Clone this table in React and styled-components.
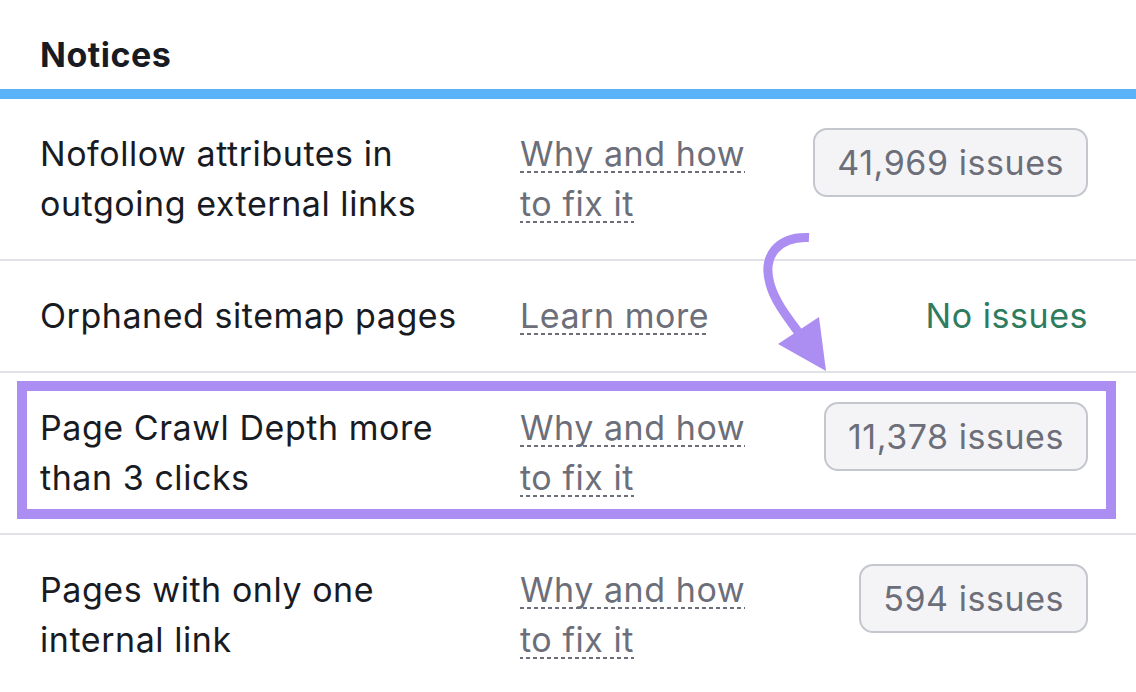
import React from "react";
import styled, { createGlobalStyle } from "styled-components";

const Global = createGlobalStyle`
  html, body { margin: 0; padding: 0; background: #ffffff; }
  body { font-family: Inter, "Noto Sans", Arial, sans-serif; -webkit-font-smoothing: antialiased; }
`;

const Page = styled.div`
  position: relative;
  width: 1136px;
  height: 692px;
  overflow: hidden;
  background: #ffffff;
`;

const Header = styled.div`
  box-sizing: border-box;
  height: 99px;
  padding: 35px 40px 0;
  border-bottom: 10px solid #5ab3f8;
`;

const Title = styled.h2`
  margin: 0;
  font-size: 34px;
  line-height: 40px;
  font-weight: 700;
  color: #191b23;
  letter-spacing: 0.5px;
`;

const Row = styled.div`
  position: relative;
  display: grid;
  grid-template-columns: 440px 240px 1fr;
  column-gap: 40px;
  align-items: start;
  padding: 30px 48px 30px 40px;
  border-bottom: 2px solid #e0e1e9;
  font-size: 34px;
  line-height: 50px;
  letter-spacing: 0.55px;
`;

const Name = styled.div`
  color: #191b23;
`;

const LinkCell = styled.div`
  color: #6c6e79;
`;

const Dashed = styled.span`
  background-image: linear-gradient(to right, #6c6e79 64%, transparent 64%);
  background-size: 7px 2px;
  background-repeat: repeat-x;
  background-position: 0 calc(100% - 1px);
`;

const Right = styled.div`
  justify-self: end;
`;

const Badge = styled.span`
  display: inline-flex;
  align-items: center;
  height: 69px;
  box-sizing: border-box;
  padding: 0 22px;
  border: 2px solid #c5c7cf;
  border-radius: 14px;
  background: #f4f4f7;
  color: #6c6e79;
  white-space: nowrap;
  margin-top: -1px;
`;

const NoIssues = styled.span`
  color: #2e7c5f;
  white-space: nowrap;
`;

const Highlight = styled.div`
  position: absolute;
  top: 8px;
  left: 17px;
  right: 20px;
  bottom: 14px;
  border: 10px solid #ac8ef3;
  pointer-events: none;
`;

const ArrowSvg = styled.svg`
  position: absolute;
  left: 740px;
  top: 225px;
  width: 100px;
  height: 150px;
  overflow: visible;
  pointer-events: none;
`;

const rows = [
  { name: "Nofollow attributes in outgoing external links", link: "Why and how to fix it", issues: "41,969 issues" },
  { name: "Orphaned sitemap pages", link: "Learn more", issues: null },
  { name: "Page Crawl Depth more than 3 clicks", link: "Why and how to fix it", issues: "11,378 issues", highlight: true },
  { name: "Pages with only one internal link", link: "Why and how to fix it", issues: "594 issues" },
];

export default function App() {
  return (
    <>
      <Global />
      <Page>
        <Header>
          <Title>Notices</Title>
        </Header>
        {rows.map((r) => (
          <Row key={r.name}>
            <Name>{r.name}</Name>
            <LinkCell>
              <Dashed>{r.link}</Dashed>
            </LinkCell>
            <Right>
              {r.issues ? <Badge>{r.issues}</Badge> : <NoIssues>No issues</NoIssues>}
            </Right>
            {r.highlight && <Highlight />}
          </Row>
        ))}
        <ArrowSvg viewBox="740 225 100 150">
          <path
            d="M809 237.5 C778 236 762 256 770 284 C775 302 788 318 799 333"
            fill="none"
            stroke="#ac8ef3"
            strokeWidth="9"
          />
          <polygon points="778,344 819,317 826,371" fill="#ac8ef3" />
        </ArrowSvg>
      </Page>
    </>
  );
}
